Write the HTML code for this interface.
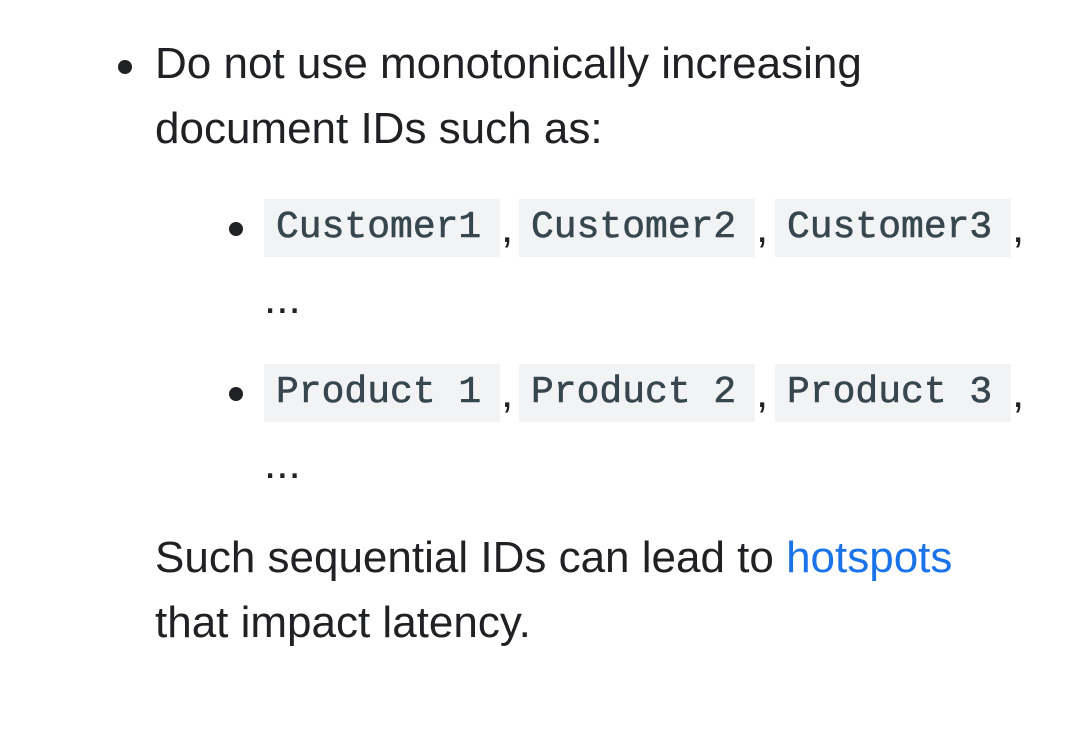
<!DOCTYPE html>
<html><head><meta charset="utf-8"><style>
body{margin:0;width:1080px;height:749px;background:#fff;position:relative;overflow:hidden;font-family:"Liberation Sans",Roboto,sans-serif;color:#202124;}
.t{position:absolute;font-size:44px;line-height:65px;white-space:nowrap;}
.dot{position:absolute;width:14px;height:14px;border-radius:50%;background:#202124;}
.c{position:absolute;top:0;height:58px;background:#f1f3f4;color:#37474f;font-family:"Liberation Mono",monospace;font-size:38px;line-height:58px;padding:0 12px;box-sizing:border-box;-webkit-text-stroke:0.6px #37474f;}
.row{position:absolute;left:0;width:1080px;height:58px;}
.comma{position:absolute;top:0;font-size:44px;line-height:58px;color:#202124}
a{color:#1a73e8;text-decoration:none}
</style></head><body>
<div class="dot" style="left:118px;top:60px"></div>
<div class="t" style="left:155px;top:31px">Do not use monotonically increasing</div>
<div class="t" style="left:155px;top:96px">document IDs such as:</div>

<div class="dot" style="left:229px;top:222px"></div>
<div class="row" style="top:199px">
<div class="c" style="left:264px;width:236px">Customer1</div><span class="comma" style="left:501px">,</span>
<div class="c" style="left:519px;width:236px">Customer2</div><span class="comma" style="left:756px">,</span>
<div class="c" style="left:775px;width:236px">Customer3</div><span class="comma" style="left:1012px">,</span>
</div>
<div class="t" style="left:264px;top:266px">...</div>

<div class="dot" style="left:229px;top:387px"></div>
<div class="row" style="top:364px">
<div class="c" style="left:264px;width:236px">Product 1</div><span class="comma" style="left:501px">,</span>
<div class="c" style="left:519px;width:236px">Product 2</div><span class="comma" style="left:756px">,</span>
<div class="c" style="left:775px;width:236px">Product 3</div><span class="comma" style="left:1012px">,</span>
</div>
<div class="t" style="left:264px;top:431px">...</div>

<div class="t" style="left:155px;top:525px">Such sequential IDs can lead to <a>hotspots</a></div>
<div class="t" style="left:155px;top:590px">that impact latency.</div>
</body></html>
